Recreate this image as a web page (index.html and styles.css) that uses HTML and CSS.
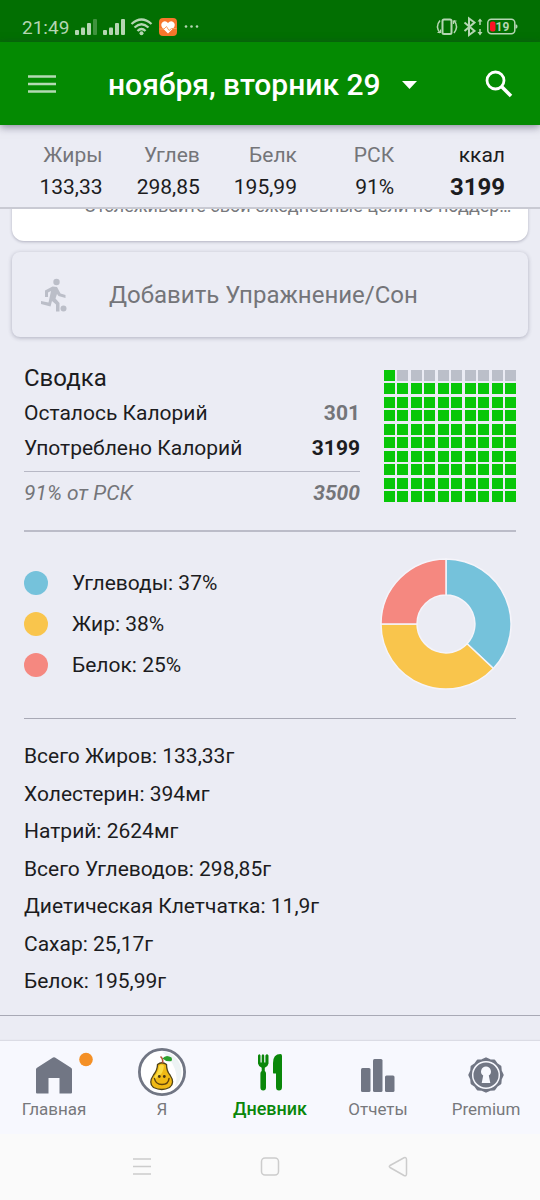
FILE: index.html
```html
<!DOCTYPE html>
<html lang="ru">
<head>
<meta charset="utf-8">
<meta name="viewport" content="width=device-width, initial-scale=1">
<title>Дневник</title>
<link rel="stylesheet" href="styles.css">
</head>
<body>
<div class="status">
  <span class="time">21:49</span>
  <svg class="status-left" width="126" height="20" viewBox="0 0 126 20" aria-hidden="true">
    <g fill="#b5d6b3">
      <rect x="0" y="13" width="4" height="5" rx="1"/><rect x="6" y="10.500" width="4" height="7.500" rx="1"/><rect x="12" y="6" width="4" height="12" rx="1"/>
      <rect x="18" y="2" width="4" height="16" rx="1" opacity=".35"/>
      <rect x="28" y="13" width="4" height="5" rx="1"/><rect x="34" y="10.500" width="4" height="7.500" rx="1"/><rect x="40" y="6" width="4" height="12" rx="1"/><rect x="46" y="2" width="4" height="16" rx="1"/>
      <circle cx="66.500" cy="16.300" r="2"/>
      <circle cx="111" cy="9.500" r="1.300"/><circle cx="116.500" cy="9.500" r="1.300"/><circle cx="122" cy="9.500" r="1.300"/>
    </g>
    <g fill="none" stroke="#b5d6b3" stroke-width="2.300">
      <path d="M56.500 7Q66.500-2 76.500 7M59.500 10.500Q66.500 4 73.500 10.500M62.500 14Q66.500 10 70.500 14"/>
    </g>
    <rect x="84" y="1" width="18" height="18" rx="4" fill="#f7772c"/>
    <path d="M93 16.500L87.500 11Q85 7.500 87.500 5.200Q90.500 3 93 6Q95.500 3 98.500 5.200Q101 7.500 98.500 11Z" fill="#fff"/>
    <path d="M84.500 12H89L91.500 9.500L94 13.500L96.500 11.500H101.500" fill="none" stroke="#f9a05f"/>
  </svg>
  <svg class="status-right" width="82" height="20" viewBox="0 0 82 20" aria-hidden="true">
    <g fill="none" stroke="#b5d6b3" stroke-width="1.500">
      <rect x="6.500" y="2.500" width="9" height="14.500" rx="1.500" stroke-width="2"/>
      <path d="M4 3.500Q-1 9.500 4 16M18 3.500Q23 9.500 18 16"/>
      <path d="M1.500 15.500H4.500V12.500M20.500 4H17.500V7" stroke-width="1.200"/>
      <path d="M28.500 5.500L38.500 14L33 18V1.500L38.500 5.500L28.500 14" stroke-width="2"/>
      <path d="M44 3V8M44 12V17"/>
      <rect x="51.800" y="2.200" width="27" height="14.600" rx="3.500"/>
    </g>
    <path d="M41.500 4.500L44 1.500L46.500 4.500ZM41.500 15L44 18.500L46.500 15ZM79.500 7.500H80.500Q81.500 8 81.500 9.500T80.500 11.500H79.500Z" fill="#b5d6b3"/>
    <rect x="54" y="4.500" width="5.500" height="10" rx="2" fill="#fb1324"/>
    <text class="charge" x="59.500" y="13.500">19</text>
  </svg>
</div>

<header class="bar">
  <button class="icon-btn" aria-label="Меню">
    <svg width="28" height="20" viewBox="0 0 28 20"><path d="M0 2.500H28M0 10H28M0 17.500H28" stroke="#b3dab3" stroke-width="2.600"/></svg>
  </button>
  <button class="date" aria-haspopup="true">ноября, вторник 29
    <svg width="15" height="8" viewBox="0 0 15 8"><path d="M0 0H15L7.500 8Z" fill="#fff"/></svg>
  </button>
  <button class="icon-btn" aria-label="Поиск">
    <svg width="28" height="28" viewBox="0 0 28 28" fill="none" stroke="#fff"><circle cx="10.500" cy="10.500" r="8.500" stroke-width="2.800"/><path d="M16.500 16.500L26 26" stroke-width="3.600"/></svg>
  </button>
</header>

<table class="totals">
  <thead><tr><th>Жиры</th><th>Углев</th><th>Белк</th><th>РСК</th><th>ккал</th></tr></thead>
  <tbody><tr><td>133,33</td><td>298,85</td><td>195,99</td><td>91%</td><td>3199</td></tr></tbody>
</table>

<main>
  <div class="peek"><section class="goal"><p>Отслеживайте свои ежедневные цели по поддержанию здоровья</p></section></div>

  <button class="add">
    <svg width="28" height="36" viewBox="0 0 28 36" aria-hidden="true">
      <circle cx="16.500" cy="4" r="3.200" fill="#bbbec8"/><circle cx="23.500" cy="30.500" r="3" fill="#bbbec8"/>
      <path d="M12.500 8.500L17 9L20.500 15.500L25.500 17V20L18.500 18L17 16L15.500 20.500L19.500 25V33.500H16V26.500L12 23L10.500 28.500L1 26V23L8.500 24.500L11 13L8 14.500V19H5V12.500Z" fill="#bbbec8"/>
    </svg>
    <span>Добавить Упражнение/Сон</span>
  </button>

  <section class="panel summary">
    <div class="calories">
      <h2>Сводка</h2>
      <dl>
        <div class="row left"><dt>Осталось Калорий</dt><dd>301</dd></div>
        <div class="row"><dt>Употреблено Калорий</dt><dd>3199</dd></div>
        <div class="row norm"><dt>91% от РСК</dt><dd>3500</dd></div>
      </dl>
    </div>
    <div class="cells" role="img" aria-label="91%"><i></i><i class="off"></i><i class="off"></i><i class="off"></i><i class="off"></i><i class="off"></i><i class="off"></i><i class="off"></i><i class="off"></i><i class="off"></i>
      <i></i><i></i><i></i><i></i><i></i><i></i><i></i><i></i><i></i><i></i>
      <i></i><i></i><i></i><i></i><i></i><i></i><i></i><i></i><i></i><i></i>
      <i></i><i></i><i></i><i></i><i></i><i></i><i></i><i></i><i></i><i></i>
      <i></i><i></i><i></i><i></i><i></i><i></i><i></i><i></i><i></i><i></i>
      <i></i><i></i><i></i><i></i><i></i><i></i><i></i><i></i><i></i><i></i>
      <i></i><i></i><i></i><i></i><i></i><i></i><i></i><i></i><i></i><i></i>
      <i></i><i></i><i></i><i></i><i></i><i></i><i></i><i></i><i></i><i></i>
      <i></i><i></i><i></i><i></i><i></i><i></i><i></i><i></i><i></i><i></i>
      <i></i><i></i><i></i><i></i><i></i><i></i><i></i><i></i><i></i><i></i>
    </div>
  </section>

  <section class="panel macros">
    <ul class="legend">
      <li class="carbs">Углеводы: 37%</li>
      <li class="fat">Жир: 38%</li>
      <li class="protein">Белок: 25%</li>
    </ul>
    <svg class="donut" width="140" height="132" viewBox="-70 -66 140 132" aria-hidden="true">
      <g stroke="#f5f4fa" stroke-width="1.500">
        <path d="M0-65A65 65 0 0 1 47.400 44.500L21.100 19.800A29 29 0 0 0 0-29Z" fill="#75c2db"/>
        <path d="M47.400 44.500A65 65 0 0 1-65 0H-29A29 29 0 0 0 21.100 19.800Z" fill="#f9c54c"/>
        <path d="M-65 0A65 65 0 0 1 0-65V-29A29 29 0 0 0-29 0Z" fill="#f58880"/>
      </g>
    </svg>
  </section>

  <ul class="nutrients">
    <li>Всего Жиров: 133,33г</li>
    <li>Холестерин: 394мг</li>
    <li>Натрий: 2624мг</li>
    <li>Всего Углеводов: 298,85г</li>
    <li>Диетическая Клетчатка: 11,9г</li>
    <li>Сахар: 25,17г</li>
    <li>Белок: 195,99г</li>
  </ul>
</main>

<nav class="tabs">
  <a href="#home">
    <svg width="68" height="48" viewBox="0 0 68 48" aria-hidden="true"><path d="M16 21.500Q16 20.500 17 19.800L33 9.500Q34 8.800 35 9.500L51 19.800Q52 20.500 52 21.500V44.500Q52 45.500 51 45.500H39.500V30H28.500V45.500H17Q16 45.500 16 44.500Z" fill="#717684"/><circle cx="66" cy="11.500" r="6.800" fill="#f49026"/></svg>
    <span>Главная</span>
  </a>
  <a href="#me">
    <svg width="48" height="48" viewBox="0 0 48 48" aria-hidden="true">
      <circle cx="24" cy="24" r="22.600" fill="#fff" stroke="#717684" stroke-width="2.800"/>
      <path d="M24 3.500A20.500 20.500 0 0 1 37 39Q43 20 24 3.500Z" fill="#edf3f4"/>
      <path d="M19.500 16.500Q24 13 28.500 16.500Q28.500 23 32 27Q37.500 35 31.500 39.500Q24 43.500 15.500 39.500Q10 35 15.500 27Q19.500 22 19.500 16.500Z" fill="#f0b914" stroke="#504418" stroke-width="1.300"/>
      <path d="M21 18Q24 15.500 26 18Q25 25 22 27Q16 31 16 35Q14.500 29 18.500 26Q21 22 21 18Z" fill="#fbdc43"/>
      <path d="M24.500 15Q25.500 11 22.500 8.500" fill="none" stroke="#b65335" stroke-width="1.600"/>
      <path d="M24.500 10.500Q28 6 33.500 9.500Q34.500 11 33.500 13Q28 14 24.500 10.500Z" fill="#2da02d"/>
      <circle cx="21.300" cy="28.500" r="1.400" fill="#4a3715"/><circle cx="26.300" cy="28.500" r="1.400" fill="#4a3715"/>
      <path d="M16.500 30.500Q17.500 36.500 24 36.500T31 30.500" fill="none" stroke="#62450d" stroke-width="1.500" stroke-linecap="round"/>
    </svg>
    <span>Я</span>
  </a>
  <a href="#diary" class="current" aria-current="page">
    <svg width="30" height="48" viewBox="0 0 30 48" fill="#0a870a" aria-hidden="true">
      <path d="M3 7.500Q4.500 5 5.500 7.500V14.500H6.700V7.500Q8 5 9.200 7.500V14.500H10.400V7.500Q12 5 13.500 7.500V15.500Q13.200 18 9.800 19.800V23Q11 23.800 11 25.500V39.500Q11 42.500 8.200 42.500T5.400 39.500V25.500Q5.400 23.800 6.700 23V19.800Q3.300 18 3 15.500Z"/>
      <path d="M18 15Q18 6 25.500 6Q27 6 27 8V39Q27 42.500 24 42.500Q21 42.500 21 39V25.500H18.500Q18 25.500 18 24.500Z"/>
    </svg>
    <span>Дневник</span>
  </a>
  <a href="#reports">
    <svg width="36" height="48" viewBox="0 0 36 48" fill="#717684" aria-hidden="true"><rect x="1" y="20" width="9.500" height="24" rx="1.500"/><rect x="13" y="11" width="9.500" height="33" rx="1.500"/><rect x="25" y="27.500" width="9.500" height="16.500" rx="1.500"/></svg>
    <span>Отчеты</span>
  </a>
  <a href="#premium">
    <svg width="36" height="48" viewBox="0 0 36 48" aria-hidden="true">
      <path d="M34.800 27L32.900 31L32.500 35.400L28.900 37.900L26.400 41.500L22 41.900L18 43.800L14 41.900L9.600 41.500L7.100 37.900L3.500 35.400L3.100 31L1.200 27L3.100 23L3.500 18.600L7.100 16.100L9.600 12.500L14 12.100L18 10.200L22 12.100L26.400 12.500L28.900 16.100L32.500 18.600L32.900 23Z" fill="#717684" stroke="#717684" stroke-width="1.800" stroke-linejoin="round"/>
      <circle cx="18" cy="27" r="13.300" fill="none" stroke="#f7f8fe" stroke-width="1.500"/>
      <path d="M18 18.500A5 5 0 0 1 20.800 27.600L22.300 35H13.700L15.200 27.600A5 5 0 0 1 18 18.500Z" fill="#f7f8fe"/>
    </svg>
    <span>Premium</span>
  </a>
</nav>

<div class="system">
  <button aria-label="Недавние"><svg width="20" height="20" viewBox="0 0 20 20"><path d="M1 2H19M1 9.500H19M1 17H19"/></svg></button>
  <button aria-label="Домой"><svg width="20" height="20" viewBox="0 0 20 20"><rect x="1.500" y="1" width="17" height="17" rx="3.500"/></svg></button>
  <button aria-label="Назад"><svg width="20" height="20" viewBox="0 0 20 20"><path d="M2 8.500L16 .8Q18.500 0 18.500 2.500V17Q18.500 19.300 16 18.500L2 10.500Q.6 9.500 2 8.500Z"/></svg></button>
</div>
</body>
</html>
```

FILE: styles.css
```css
* { box-sizing: border-box; }

body {
  margin: 0;
  min-height: 100vh;
  display: flex;
  flex-direction: column;
  background: #ebecf4;
  color: #1c1c1e;
  font-family: Roboto, "Noto Sans", sans-serif;
  font-size: 21px;
  line-height: 25px;
}

button {
  border: 0;
  padding: 0;
  background: none;
  color: inherit;
  font: inherit;
  cursor: pointer;
}

svg { display: block; flex: none; overflow: visible; }
h2, p, ul, dl, dd { margin: 0; padding: 0; }
ul { list-style: none; }

.status {
  display: flex;
  align-items: center;
  height: 42px;
  padding: 12px 22px 0;
  background: #026f02;
  color: #b5d6b3;
}
.time { font-size: 19px; }
.status-left { margin-left: 6px; }
.status-right { margin-left: auto; }
.charge { fill: #b5d6b3; font-size: 12px; font-weight: 700; }

.bar {
  display: flex;
  align-items: center;
  height: 83px;
  padding: 0 27px 0 28px;
  background: #048a02;
  color: #fff;
  position: relative;
  box-shadow: 0 2px 8px rgba(40, 40, 70, .5);
}
.date {
  display: flex;
  align-items: center;
  gap: 21px;
  margin: 0 auto 0 52px;
  padding-top: 2px;
  font-size: 30px;
  font-weight: 500;
  line-height: 34px;
}

.totals {
  width: 100%;
  table-layout: fixed;
  border-collapse: collapse;
  border-bottom: 2px solid #c9cad3;
}
.totals th, .totals td { padding: 0; text-align: right; font-weight: 400; }
.totals th { width: 18%; padding-top: 18px; color: #747579; }
.totals th:first-child { width: 19%; }
.totals th:last-child, .totals td:last-child { padding-right: 35px; }
.totals th:last-child { width: 27%; color: #1c1c1e; }
.totals td { height: 40px; }
.totals td:last-child { font-size: 24px; font-weight: 700; }

main { flex: 1; display: flex; flex-direction: column; border-bottom: 1px solid #a8a9b5; }

.peek {
  display: flex;
  flex-direction: column;
  justify-content: flex-end;
  height: 38px;
  padding: 0 12px 6px;
  overflow: hidden;
}
.goal {
  flex: none;
  padding: 40px 12px 23px 72px;
  border-radius: 12px;
  background: #fff;
  color: #77787c;
  font-size: 18px;
  box-shadow: 0 1px 3px rgba(40, 40, 70, .3);
}
.goal p { overflow: hidden; white-space: nowrap; text-overflow: ellipsis; }

.add {
  display: flex;
  align-items: center;
  gap: 41px;
  height: 85px;
  margin: 5px 12px 0;
  padding: 2px 0 0 28px;
  border-radius: 8px;
  color: #747579;
  font-size: 24px;
  box-shadow: 0 1px 4px rgba(40, 40, 70, .3);
}

.panel {
  display: flex;
  justify-content: space-between;
  margin: 0 24px;
  border-bottom: 2px solid #bbbcc8;
}
.summary { gap: 24px; padding: 33px 0 19px; }
.calories { flex: 1; display: flex; flex-direction: column; }
.calories h2 { font-size: 24px; font-weight: 400; line-height: 16px; }
.row { display: flex; justify-content: space-between; line-height: 35px; }
.row:first-child { margin-top: 10px; }
.row dd { font-weight: 700; }
.row.left dd { color: #747579; }
.row.norm { margin-top: 5px; padding-top: 4px; border-top: 1px solid #b7b8c5; color: #747579; font-style: italic; }
.cells {
  display: grid;
  grid-template: repeat(10, 11px) / repeat(10, 11px);
  align-content: space-between;
  justify-content: space-between;
  width: 132px;
  height: 132px;
}
.cells i { background: #08c708; }
.cells .off { background: #bbbfc9; }

.macros { align-items: center; padding: 26px 0 28px; border-width: 1px; border-color: #a8a9b5; }
.legend { display: grid; gap: 16px; }
.legend li { display: flex; align-items: center; gap: 24px; }
.legend li::before { content: ""; width: 24px; height: 24px; border-radius: 50%; background: #75c2db; }
.legend .fat::before { background: #f9c54c; }
.legend .protein::before { background: #f58880; }

.nutrients {
  flex: 1;
  display: flex;
  flex-direction: column;
  justify-content: space-between;
  padding: 25px 24px 21px;
}

.tabs {
  display: grid;
  grid-template-columns: repeat(5, 1fr);
  margin-top: 25px;
  padding: 7px 0 12px;
  background: #f7f8fe;
  box-shadow: 0 -1px 1px rgba(40, 40, 70, .08);
}
.tabs a {
  display: flex;
  flex-direction: column;
  align-items: center;
  color: #77787c;
  font-size: 17px;
  line-height: 26px;
  text-decoration: none;
}
.tabs .current { color: #0a870a; font-size: 18px; font-weight: 500; }

.system {
  display: flex;
  justify-content: center;
  align-items: center;
  gap: 108px;
  height: 66px;
  background: #fafafa;
}
.system svg { fill: none; stroke: #ccc; stroke-width: 1.5px; }
```
